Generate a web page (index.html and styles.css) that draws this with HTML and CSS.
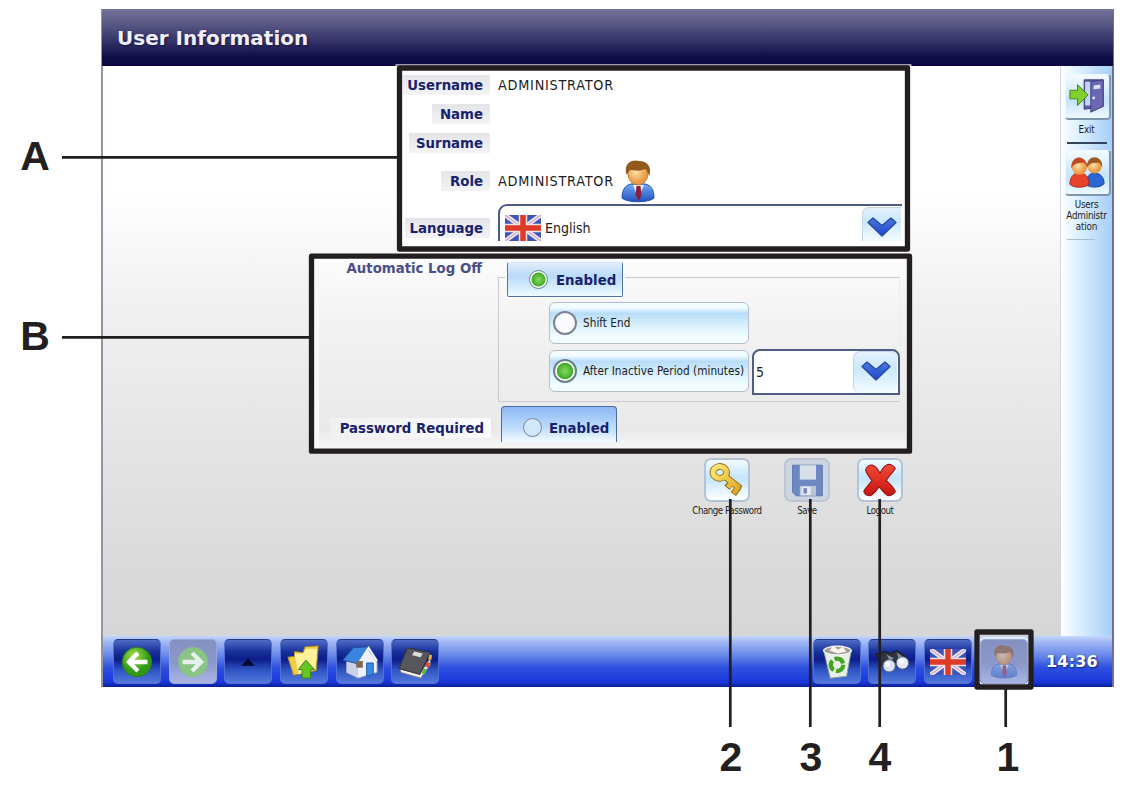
FILE: index.html
```html
<!DOCTYPE html>
<html lang="en">
<head>
<meta charset="utf-8">
<title>User Information</title>
<link rel="stylesheet" href="styles.css">
</head>
<body>
<svg class="defs" width="0" height="0">
  <defs>
    <linearGradient id="suit" x1="0" y1="0" x2="0" y2="1"><stop offset="0" stop-color="#75aaf2"/><stop offset="1" stop-color="#1f52c0"/></linearGradient>
    <radialGradient id="skin" cx=".4" cy=".4"><stop offset="0" stop-color="#ffe0a8"/><stop offset="1" stop-color="#e89a45"/></radialGradient>
    <radialGradient id="green" cx=".4" cy=".3"><stop offset="0" stop-color="#a4e04c"/><stop offset="1" stop-color="#2f9a16"/></radialGradient>
    <linearGradient id="gold" x1="0" y1="0" x2="1" y2="1"><stop offset="0" stop-color="#ffe978"/><stop offset="1" stop-color="#dca41c"/></linearGradient>
    <linearGradient id="red" x1="0" y1="0" x2="0" y2="1"><stop offset="0" stop-color="#f24a35"/><stop offset="1" stop-color="#c81410"/></linearGradient>
    <linearGradient id="blue" x1="0" y1="0" x2="0" y2="1"><stop offset="0" stop-color="#4a7ad6"/><stop offset="1" stop-color="#1f45d0"/></linearGradient>
    <symbol id="flag" viewBox="0 0 36 26">
      <path fill="#3e55b4" d="M0 0h36v26H0z"/>
      <path stroke="#e3e6f6" stroke-width="4.500" d="M0 0l36 26M36 0L0 26"/>
      <path stroke="#d98a9e" stroke-width="1" d="M0 0l36 26M36 0L0 26"/>
      <path stroke="#f3e0e4" stroke-width="8.500" d="M18 0v26M0 13h36"/>
      <path stroke="#de3a28" stroke-width="5.500" d="M18 0v26M0 13h36"/>
    </symbol>
    <symbol id="person" viewBox="0 0 34 43">
      <path fill="url(#suit)" stroke="#2450a8" d="M1 38c0-9 4-13 9-14h14c6 1 9 6 9 14-5 5-27 5-32 0z"/>
      <path fill="#e9f1fd" d="M12 25l5 13 6-13z"/>
      <path fill="#8c1d3c" d="M15.500 26h4l1 9-2.500 6-3.500-6z"/>
      <ellipse cx="17" cy="14" rx="10" ry="11" fill="url(#skin)" stroke="#a8692b" stroke-width=".7"/>
      <path fill="#92591f" d="M5.500 15C2 2 12-1 18 1c10 0 13 8 10 15-1-3-2-6-4-7-6 3-11 1-15 1-1 1-2 3-3.500 5z"/>
    </symbol>
    <symbol id="chevron" viewBox="0 0 30 20">
      <path fill="url(#blue)" stroke="#2347a4" stroke-width="1.300" stroke-linejoin="round" d="M1 5.500L6 1l9 7.500L24 1l5 4.500L15 19z"/>
    </symbol>
  </defs>
</svg>

<div class="figure">
  <div class="screen">
    <header class="titlebar">User Information</header>
    <div class="body">
      <main class="content">
        <section class="profile">
          <div class="row row-username"><span class="label">Username</span><span class="value">ADMINISTRATOR</span></div>
          <div class="row row-name"><span class="label">Name</span></div>
          <div class="row row-surname"><span class="label">Surname</span></div>
          <div class="row row-role"><span class="label">Role</span><span class="value">ADMINISTRATOR</span><svg class="avatar"><use href="#person"/></svg></div>
          <div class="row row-language"><span class="label">Language</span>
            <div class="combo combo-language"><svg class="combo-flag"><use href="#flag"/></svg><span class="combo-text">English</span><span class="drop"><svg><use href="#chevron"/></svg></span></div>
          </div>
        </section>
        <section class="security">
          <div class="logoff">
            <span class="label faded">Automatic Log Off</span>
            <div class="group">
              <div class="group-frame"></div>
              <div class="toggle toggle-logoff"><i class="radio small on"></i>Enabled</div>
              <div class="option"><i class="radio"></i>Shift End</div>
              <div class="option-line">
                <div class="option"><i class="radio on"></i>After Inactive Period (minutes)</div>
                <div class="combo combo-minutes"><span class="combo-text">5</span><span class="drop"><svg><use href="#chevron"/></svg></span></div>
              </div>
            </div>
          </div>
          <div class="required">
            <span class="label light">Password Required</span>
            <div class="toggle toggle-password"><i class="radio small"></i>Enabled</div>
          </div>
        </section>
        <div class="actions">
          <div class="action"><span class="tile"><svg viewBox="0 0 40 40">
            <g fill="none" stroke-linejoin="round"><path stroke="#8f6a12" stroke-width="7.500" d="M4.500 12a7.500 6.500 0 1 0 15-2a7.500 6.500 0 1 0-15 2M17 15l18 14M33 27l-6 8M26 21l-6 7"/>
            <path stroke="url(#gold)" stroke-width="5.600" d="M4.500 12a7.500 6.500 0 1 0 15-2a7.500 6.500 0 1 0-15 2M17 15l17 13.300M32.500 27.500l-5 6.800M26 22l-5 5.500"/></g></svg></span><span class="caption">Change Password</span></div>
          <div class="action"><span class="tile disabled"><svg viewBox="0 0 40 40">
            <path fill="#6d89c4" stroke="#5872aa" d="M4 3h33v34H8l-4-4z"/><path fill="#d9dfe9" d="M12 3h18v16H12z"/><path fill="#b8c4d9" d="M12 26h18v11H12z"/><path fill="#e9edf3" d="M14 27h10v9H14z"/><path fill="#6d89c4" d="M16 28.500h4v6h-4z"/></svg></span><span class="caption">Save</span></div>
          <div class="action"><span class="tile"><svg viewBox="0 0 40 40">
            <path fill="url(#red)" stroke="#8e1511" stroke-width="1.200" stroke-linejoin="round" d="M4 8c1-3 4-6 8-5 3 1 6 5 8 9 2-4 6-9 9-10 4 0 7 3 8 5-3 4-8 9-10 13 4 4 8 7 10 12-1 3-5 5-8 5-4-2-7-6-10-10-3 4-6 9-10 10-3 0-6-2-7-5 2-5 7-8 9-12-3-4-6-7-7-12z"/></svg></span><span class="caption">Logout</span></div>
        </div>
      </main>
      <aside class="sidebar">
        <span class="side-tile"><svg viewBox="0 0 40 40">
          <path fill="#5c5aa2" stroke="#3b3a7c" d="M17 3h20v28l-20 3z"/><path fill="#c3d3f4" d="M18 5h8v25h-8z"/><path fill="#6b67b2" stroke="#3f3d80" d="M24 5l13-2v28l-13 6z"/><path fill="#dfe3f8" d="M27 9l7-1v4l-7 1z"/><circle cx="27" cy="22" r="1.500" fill="#e8e8f8"/>
          <path fill="#7fd02c" stroke="#3c8414" d="M2 14h8V8l11 11-11 11v-7H2z"/></svg></span>
        <span class="side-text">Exit</span>
        <span class="side-line"></span>
        <span class="side-tile"><svg viewBox="0 0 40 40">
          <path fill="#2c66d4" stroke="#17439c" d="M19 33c0-8 4-12 9-12s10 4 10 11c-3 5-16 5-19 1z"/><circle cx="28" cy="14" r="7.500" fill="url(#skin)"/><path fill="#9a5a20" d="M20 15c-1-14 17-14 16 0-1-3-3-4-4-5-4 1-8-1-12 5z"/>
          <path fill="#e8432b" stroke="#a62513" d="M2 33c0-8 4-12 10-12s10 4 10 12c-4 4-16 4-20 0z"/><circle cx="12" cy="15" r="8" fill="url(#skin)"/><path fill="#c2481d" d="M3.500 16c-1-15 17-15 17 0-1-4-3-5-4-6-4 1-9-1-13 6z"/></svg></span>
        <span class="side-text side-users">Users<br>Administr<br>ation</span>
        <span class="side-line pale"></span>
      </aside>
    </div>
    <footer class="taskbar">
      <span class="task"><svg viewBox="0 0 40 40"><circle cx="20" cy="20" r="15.500" fill="url(#green)" stroke="#2c7a1c"/><path fill="none" stroke="#fff" stroke-width="4.500" d="M31 20H13M21 10.500L11.500 20l9.500 9.500"/></svg></span>
      <span class="task off"><svg viewBox="0 0 40 40"><circle cx="20" cy="20" r="15.500" fill="#8bc586" stroke="#8ab890"/><path fill="none" stroke="#e6f0ec" stroke-width="4.500" d="M9 20h18M19 10.500l9.500 9.500-9.500 9.500"/></svg></span>
      <span class="task"><svg viewBox="0 0 40 40"><path fill="#05092e" d="M13 24l7-8 7 8z"/></svg></span>
      <span class="task"><svg viewBox="0 0 40 40"><path fill="#efcb46" stroke="#a18524" d="M3 15l7-1v-5l9 1 2-6 14-1-2 26-24 5z"/><path fill="#fff09a" d="M10 11h9l3-5h12l-2 22-18 5z"/><path fill="#66c522" stroke="#38811a" d="M14 28l8-10 9 10h-4v9h-9v-9z"/></svg></span>
      <span class="task"><svg viewBox="0 0 40 40"><path fill="#eef2fc" stroke="#8c97b8" d="M6 16L29 7l9 13v11l-20 6-12-6z"/><path fill="#c9d2ea" d="M6 18l12 5v13L6 31z"/><path fill="#3885df" stroke="#1e4fa0" d="M2 18L13 5l16-1-11 18z"/><path fill="none" stroke="#f8faff" stroke-width="2" d="M18 22L29 5l9 14"/><path fill="#7c6a50" d="M16 19h7v7h-7z"/><path fill="#3a8ae8" stroke="#2059a8" d="M27 21h7v12l-7 2z"/></svg></span>
      <span class="task"><svg viewBox="0 0 40 40"><path fill="#f1f1ee" stroke="#777" d="M4 27l21 6 11-17v7L26 37 5 31z"/><path fill="#56565c" stroke="#303036" d="M12 5l24 5-11 23-22-6z"/><path fill="#dedee2" d="M19 9l9 2-2 4-9-2z"/><path fill="#e9b72f" d="M35 12l3 1-1 5-3-1z"/><path fill="#dd4b32" d="M32 20l4 1-2 5-3-1z"/><path fill="#60bb30" d="M29 27l4 1-3 5-3-1z"/></svg></span>
      <span class="grow"></span>
      <span class="task"><svg viewBox="0 0 40 40"><path fill="#e8efea" stroke="#91a69b" d="M6 8h29l-5 27-17 2z"/><ellipse cx="20.500" cy="8" rx="14.500" ry="4.500" fill="#a59b92" stroke="#eef4f4" stroke-width="1.500"/><path fill="#f7f5ee" d="M12 8l4-5 5 4 5-3 4 5-9 2z"/><circle cx="20" cy="23" r="6.500" fill="none" stroke="#43a31c" stroke-width="4.500" stroke-dasharray="11 2.600"/></svg></span>
      <span class="task"><svg viewBox="0 0 40 40"><path fill="#31343d" stroke="#16181e" d="M3 12l9-3 6 2 7-3 8 5 4 9-6 5-8-8-5 8-8-3z"/><path fill="#8b93a6" d="M14 12l8 4-4 3zM25 10l7 5-5 1z"/><circle cx="17" cy="24" r="6.500" fill="#dbe3f8" stroke="#5c6377"/><circle cx="31" cy="21" r="6.500" fill="#e4eafa" stroke="#5c6377"/><circle cx="15.500" cy="22.500" r="2.500" fill="#fff"/><circle cx="30" cy="19.500" r="2.500" fill="#fff"/></svg></span>
      <span class="task"><svg class="task-flag"><use href="#flag"/></svg></span>
      <span class="task user off"><svg><use href="#person"/></svg></span>
      <span class="clock">14:36</span>
    </footer>
  </div>

  <svg class="callouts" viewBox="0 0 1124 788">
    <g fill="none" stroke="#231f20">
      <g stroke="#fff" stroke-width="8" opacity=".6"><rect x="399.500" y="68" width="508" height="181"/></g>
      <g stroke-width="5.300" stroke-linejoin="round">
        <rect x="399.500" y="68" width="508" height="181"/>
        <rect x="311.500" y="256.200" width="598" height="195"/>
        <rect x="977" y="632" width="54" height="55"/>
      </g>
      <path stroke-width="2.700" d="M62 157.300h336M62 337.300h248M730.300 499v228M810.300 499v228M879.700 499v228M1005.700 689v38"/>
    </g>
  </svg>
  <span class="mark mark-a">A</span>
  <span class="mark mark-b">B</span>
  <span class="mark mark-2">2</span>
  <span class="mark mark-3">3</span>
  <span class="mark mark-4">4</span>
  <span class="mark mark-1">1</span>
</div>
</body>
</html>
```
FILE: styles.css
```css
* { box-sizing: border-box; }
body { margin: 0; background: #fff; font-family: "DejaVu Sans Condensed", "DejaVu Sans", sans-serif; font-stretch: condensed; color: #1c1c22; }
.defs { position: absolute; }
.figure { position: relative; width: 1124px; height: 788px; padding: 9px 0 0 101px; overflow: hidden; }
.screen { width: 1013px; height: 678px; display: flex; flex-direction: column; border-left: 2px solid #9293a3; border-right: 2px solid #6b7296; }

.titlebar { height: 57px; flex: none; margin: 0 -1px; padding: 0 0 0 15px; line-height: 59px; font-family: "DejaVu Sans", sans-serif; font-stretch: normal; font-weight: bold; font-size: 20px; letter-spacing: 0; color: #f1f0f8; text-shadow: 1px 1px 2px #15133a; background: linear-gradient(#74739b, #5a5884 25%, #36346a 55%, #110d46 85%, #0b0742); }
.body { flex: 1; display: flex; min-height: 0; }
.content { flex: 1; background: linear-gradient(#fff 0, #fff 22%, #f3f3f4 38%, #e5e5e6 65%, #dadadb 88%, #d6d6d6); }

.profile { width: 502px; height: 180px; margin-left: 299px; padding-top: 4px; background: #fff; }
.row { display: grid; grid-template-columns: 88px auto auto 1fr; column-gap: 8px; align-items: center; }
.row .label { margin-left: auto; }
.row-username { height: 30px; }
.row-name { height: 28px; }
.row-surname { height: 30px; }
.row-role { height: 46px; }
.row-language { height: 42px; grid-template-columns: 88px 404px; }
.row-language .label { margin-top: 5px; }
.label { height: 20px; line-height: 19px; padding: 0 7px 0 5px; font-weight: bold; font-size: 14.8px; color: #18226c; white-space: nowrap; background: linear-gradient(#e4e5e9, #f3f3f6); }
.row-name .label { padding-left: 8px; }
.row-surname .label { padding-left: 7px; }
.row-role .label { padding-left: 9px; }
.label.light { background: linear-gradient(90deg, #f0f0f2, #fbfbfc); }
.label.faded { color: #4b4f83; background: #fafafb; }
.value { font-size: 14.300px; letter-spacing: .76px; margin-right: -1px; }
.avatar { width: 34px; height: 43px; }

.combo { display: flex; border: 2px solid #4c5c84; background: #fff; }
.combo-language { height: 37px; align-self: start; border-right: 0; border-bottom: 0; border-radius: 9px 0 0 0; padding: 0 1px 0 5px; align-items: center; }
.combo-flag { width: 36px; height: 26px; margin-top: 8px; }
.combo-text { margin: 9px 0 0 4px; font-size: 14px; }
.drop { margin-left: auto; width: 39px; height: 34px; border-radius: 7px 0 0 0; border: 1px solid #c5d3e4; border-right: 0; border-bottom: 0; background: linear-gradient(#e6f2fb, #c9e7fb 40%, #f4fcff); display: flex; align-items: center; justify-content: center; }
.drop svg { width: 30px; height: 20px; }
.combo-language .drop svg { margin-top: 6px; }

.security { width: 592px; height: 190px; margin: 13px 0 0 211px; padding: 3px 6px 0; background: linear-gradient(#fcfcfd, #f3f3f4 30%, #e9e9ea 90%, #f8f8f9); border-left: 5px solid #fafafa; }
.logoff { display: flex; height: 144px; gap: 8px; }
.logoff > .label { margin-left: 15px; width: 151px; height: 15px; line-height: 11px; text-align: right; padding-left: 0; }
.group { width: 403px; position: relative; }
.group-frame { position: absolute; inset: 15px 0 4px 1px; border: 1px solid #c9c9cf; border-right-color: #ededf0; }
.toggle { position: relative; display: flex; align-items: center; font-weight: bold; font-size: 14.8px; color: #18226c; }
.toggle-logoff { width: 116px; height: 35px; margin: 0 0 5px 10px; padding: 0 0 0 21px; gap: 8px; border: 1px solid #53749d; border-top-color: #dce8f8; border-radius: 2px; background: linear-gradient(#e2eefb, #b9daf8 40%, #ecfbff); box-shadow: 0 0 0 2px #f7f9fc; }
.toggle-password { width: 116px; height: 36px; padding-left: 21px; padding-top: 6px; gap: 7px; border: 1px solid #4e6d9a; border-bottom: 0; border-radius: 4px 4px 0 0; background: linear-gradient(#8db8f5, #bfddfb 60%, #f1fbff); }
.radio { flex: none; width: 24px; height: 24px; border: 2px solid #7b8494; border-radius: 50%; background: #fbfafc; }
.radio.on { border-color: #6c8089; background: radial-gradient(circle closest-side, #84da5c, #43ab2c 78%, #f3fbf3 86%); }
.radio.small { width: 19px; height: 19px; border-width: 1.5px; }
.toggle-password .radio { background: #d3e7fb; }
.option { position: relative; width: 200px; height: 42px; margin-left: 52px; padding-left: 3px; gap: 6px; display: flex; align-items: center; font-size: 11.7px; letter-spacing: .02px; white-space: nowrap; border: 1px solid #b5c0cc; border-radius: 6px; background: linear-gradient(#f2fbff 12%, #b7dcf8 26%, #d9effc 55%, #f3fdff 85%); }
.option-line { display: flex; gap: 3px; margin-top: 5px; position: relative; }
.option-line .option { margin-top: 1px; }
.combo-minutes { width: 148px; height: 46px; border-radius: 8px 8px 0 0; padding-right: 1px; align-items: center; }
.combo-minutes .combo-text { margin: 0 0 0 2px; }
.combo-minutes .drop { width: 44px; height: 42px; padding-bottom: 3px; border-radius: 7px; }
.required { display: flex; gap: 10px; }
.required .label { width: 161px; margin: 12px 0 0 5px; text-align: right; }

.actions { display: flex; justify-content: flex-end; margin: 9px 157px 0 0; gap: 27px; }
.action { display: flex; flex-direction: column; align-items: center; width: 46px; }
.action:first-child { margin-right: 7px; }
.tile { width: 46px; height: 44px; border: 2px solid #b3c3d7; border-radius: 7px; background: linear-gradient(#f3fbff, #c5e4fa 45%, #fff); display: flex; align-items: center; justify-content: center; }
.tile svg { width: 36px; height: 37px; }
.tile.disabled { border-color: #bcc5d4; background: #ccd5e1; }
.caption { font-size: 9.6px; line-height: 16px; letter-spacing: -.45px; margin-top: 1px; white-space: nowrap; }

.sidebar { width: 52px; display: flex; flex-direction: column; align-items: center; padding-top: 8px; border-left: 1px solid #d1d6e2; background: linear-gradient(90deg, #fff, #d3ebfd 45%, #a8cef8); }
.side-tile { width: 46px; height: 46px; padding: 2px; margin-left: 2px; border: 1px solid #f2f8ff; border-right: 2px solid #7f9ab9; border-bottom: 2px solid #7d94b0; border-radius: 4px; background: linear-gradient(#f3fbff, #c5e3f9 60%, #eef9ff); }
.side-tile svg { width: 38px; height: 38px; }
.side-text { font-size: 9.8px; line-height: 11px; letter-spacing: -.2px; text-align: center; margin-top: 4px; }
.side-users { margin-top: 3px; }
.side-line { width: 40px; height: 2px; margin: 7px 0 6px; background: #34445e; }
.side-line.pale { width: 28px; height: 1px; background: #a9bdd0; align-self: flex-start; margin-left: 6px; }

.taskbar { flex: none; height: 51px; display: flex; align-items: flex-start; gap: 7.700px; padding: 3px 0 0 10px; background: linear-gradient(#c4d6fb, #a1b8f4 12%, #6384e8 40%, #2d50df 62%, #1a38dc 90%, #0c1e94); }
.task { flex: none; width: 48px; height: 45px; display: flex; align-items: center; justify-content: center; border: 1px solid #5270d0; border-top-color: #213a8e; border-radius: 5px; background: linear-gradient(#506cc6, #1b359d 25%, #0c1c88 45%, #2f55c4 70%, #5379dc); }
.task svg { width: 38px; height: 38px; }
.task.off { background: linear-gradient(#8391c0, #8c98cb 55%, #a8b5e4); border-color: #97a7da; }
.task .task-flag { width: 36px; height: 26px; }
.grow { flex: 1; }
.task.user { margin-left: .5px; box-shadow: 0 0 0 2px #e8edf8; }
.task.user svg { height: 34px; opacity: .5; }
.clock { width: 76px; padding-left: 10px; line-height: 45px; font-family: "DejaVu Sans", sans-serif; font-stretch: normal; font-weight: bold; font-size: 16px; letter-spacing: .2px; color: #fff; text-shadow: 1px 1px 2px #102078; }

/* Numbered callouts drawn over the screen */
.callouts { position: absolute; left: 0; top: 0; width: 1124px; height: 788px; }
.mark { position: absolute; width: 40px; text-align: center; font: bold 41px/41px "Liberation Sans", Arial, sans-serif; color: #231f20; }
.mark-a { left: 15px; top: 136px; }
.mark-b { left: 15px; top: 316px; }
.mark-2 { left: 711px; top: 737px; }
.mark-3 { left: 791px; top: 737px; }
.mark-4 { left: 860px; top: 737px; }
.mark-1 { left: 988px; top: 737px; }
```
